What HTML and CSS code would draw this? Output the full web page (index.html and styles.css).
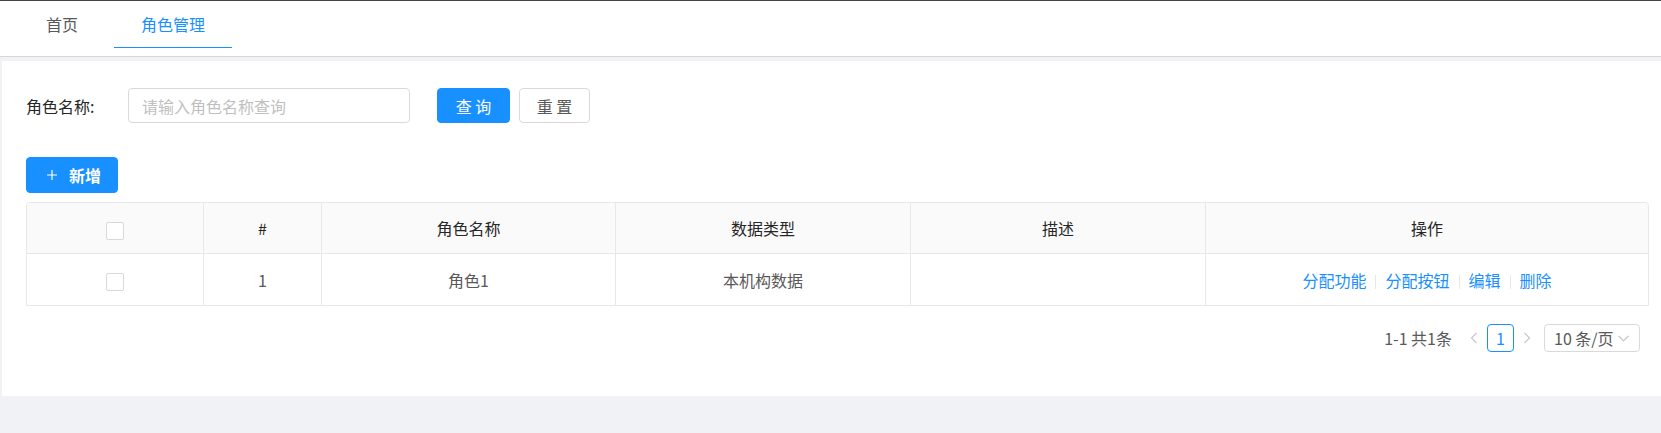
FILE: index.html
```html
<!DOCTYPE html>
<html>
<head>
    <meta charset="utf-8">
    <title>角色管理</title>
    <link rel="stylesheet" href="styles.css">
</head>
<body>
    <div id="tabbar">
        <div class="tab">首页</div>
        <div class="tab tab_active">角色管理</div>
    </div>

    <div id="container_main">
        <div id="search_row">
            <label class="search_label">角色名称:</label>
            <input type="text" class="search_input" placeholder="请输入角色名称查询">
            <button class="btn btn_primary btn_query">查 询</button>
            <button class="btn btn_reset">重 置</button>
        </div>

        <div id="toolbar">
            <button class="btn btn_primary btn_add">
                <svg width="10" height="10" viewBox="0 0 10 10"><path d="M5 0V10M0 5H10" stroke="#fff" stroke-width="1.2"/></svg>
                <span>新增</span>
            </button>
        </div>

        <table id="role_table">
            <colgroup>
                <col style="width: 177px">
                <col style="width: 118px">
                <col style="width: 294px">
                <col style="width: 295px">
                <col style="width: 295px">
                <col>
            </colgroup>
            <thead>
                <tr>
                    <th><span class="checkbox"></span></th>
                    <th>#</th>
                    <th>角色名称</th>
                    <th>数据类型</th>
                    <th>描述</th>
                    <th>操作</th>
                </tr>
            </thead>
            <tbody>
                <tr>
                    <td><span class="checkbox"></span></td>
                    <td>1</td>
                    <td>角色1</td>
                    <td>本机构数据</td>
                    <td></td>
                    <td>
                        <a class="action">分配功能</a><span class="divider"></span><a class="action">分配按钮</a><span class="divider"></span><a class="action">编辑</a><span class="divider"></span><a class="action">删除</a>
                    </td>
                </tr>
            </tbody>
        </table>

        <div id="pagination">
            <span class="page_total">1-1 共1条</span>
            <span class="page_arrow">
                <svg width="8" height="12" viewBox="0 0 8 12"><path d="M6.5 1L1.5 6L6.5 11" fill="none" stroke="#c8c8c8" stroke-width="1.2"/></svg>
            </span>
            <span class="page_item">1</span>
            <span class="page_arrow">
                <svg width="8" height="12" viewBox="0 0 8 12"><path d="M1.5 1L6.5 6L1.5 11" fill="none" stroke="#c8c8c8" stroke-width="1.2"/></svg>
            </span>
            <span class="page_size">
                <span>10 条/页</span>
                <svg width="11" height="7" viewBox="0 0 11 7"><path d="M0.5 0.8L5.5 5.8L10.5 0.8" fill="none" stroke="#bfbfbf" stroke-width="1.1"/></svg>
            </span>
        </div>
    </div>
</body>
</html>
```

FILE: styles.css
```css
* {
    box-sizing: border-box;
    font-family: "Noto Sans CJK SC", "Liberation Sans", sans-serif;
}
body {
    margin: 0;
    background: #f0f2f5;
}
#tabbar {
    display: flex;
    height: 57px;
    padding-left: 19px;
    background: #fff;
    border-top: 1px solid #444;
    border-bottom: 1px solid #d6d6d6;
}
.tab {
    height: 47px;
    line-height: 46px;
    padding: 0 27px;
    margin-right: 9px;
    font-size: 16px;
    color: #595959;
    border-bottom: 1px solid transparent;
}
.tab_active {
    color: #1890ff;
    border-bottom-color: #1890ff;
}
#container_main {
    height: 335px;
    margin: 4px 0 0 2px;
    padding: 27px 12px 0 24px;
    background: #fff;
}
#search_row {
    display: flex;
    align-items: center;
    height: 35px;
}
.search_label {
    width: 102px;
    font-size: 16px;
    color: #262626;
}
.search_input {
    width: 282px;
    height: 35px;
    padding: 0 13px;
    margin-right: 27px;
    border: 1px solid #d9d9d9;
    border-radius: 4px;
    font-size: 16px;
    color: #595959;
    outline: none;
}
.search_input::placeholder {
    color: #bfbfbf;
}
.btn {
    height: 35px;
    border: 1px solid #d9d9d9;
    border-radius: 4px;
    background: #fff;
    color: #595959;
    font-size: 16px;
    padding: 0;
    cursor: pointer;
}
.btn_primary {
    background: #1890ff;
    border-color: #1890ff;
    color: #fff;
}
.btn_query {
    width: 73px;
    margin-right: 9px;
}
.btn_reset {
    width: 71px;
}
#toolbar {
    margin-top: 34px;
    height: 36px;
}
.btn_add {
    display: flex;
    align-items: center;
    width: 92px;
    height: 36px;
    padding-left: 20px;
}
.btn_add span {
    margin-left: 12px;
    font-size: 16px;
    font-weight: bold;
}
#role_table {
    width: 1623px;
    margin: 9px 0 0 0;
    table-layout: fixed;
    border-collapse: separate;
    border-spacing: 0;
    border: 1px solid #e8e8e8;
    border-radius: 4px 4px 0 0;
    font-size: 16px;
}
#role_table th,
#role_table td {
    text-align: center;
    font-weight: normal;
    border-right: 1px solid #e8e8e8;
    padding: 0;
}
#role_table th:last-child,
#role_table td:last-child {
    border-right: none;
}
#role_table th {
    height: 51px;
    background: #fafafa;
    color: #262626;
    border-bottom: 1px solid #e8e8e8;
}
#role_table th:first-child {
    border-top-left-radius: 4px;
}
#role_table th:last-child {
    border-top-right-radius: 4px;
}
#role_table td {
    height: 51px;
    color: #595959;
}
.checkbox {
    display: inline-block;
    width: 18px;
    height: 18px;
    vertical-align: middle;
    border: 1px solid #d9d9d9;
    border-radius: 2px;
    background: #fff;
}
.action {
    color: #1890ff;
    cursor: pointer;
}
.divider {
    display: inline-block;
    width: 1px;
    height: 14px;
    margin: 0 9px;
    vertical-align: middle;
    background: #e8e8e8;
}
#pagination {
    display: flex;
    justify-content: flex-end;
    align-items: center;
    margin: 18px 9px 0 0;
    height: 28px;
    font-size: 16px;
    color: #595959;
}
.page_total {
    margin-right: 18px;
}
.page_arrow {
    display: flex;
    align-items: center;
}
.page_item {
    width: 27px;
    height: 28px;
    line-height: 26px;
    margin: 0 9px;
    text-align: center;
    border: 1px solid #1890ff;
    border-radius: 4px;
    color: #1890ff;
}
.page_size {
    display: flex;
    align-items: center;
    justify-content: space-between;
    width: 96px;
    height: 28px;
    margin-left: 13px;
    padding: 0 10px 0 9px;
    border: 1px solid #d9d9d9;
    border-radius: 4px;
}
```
